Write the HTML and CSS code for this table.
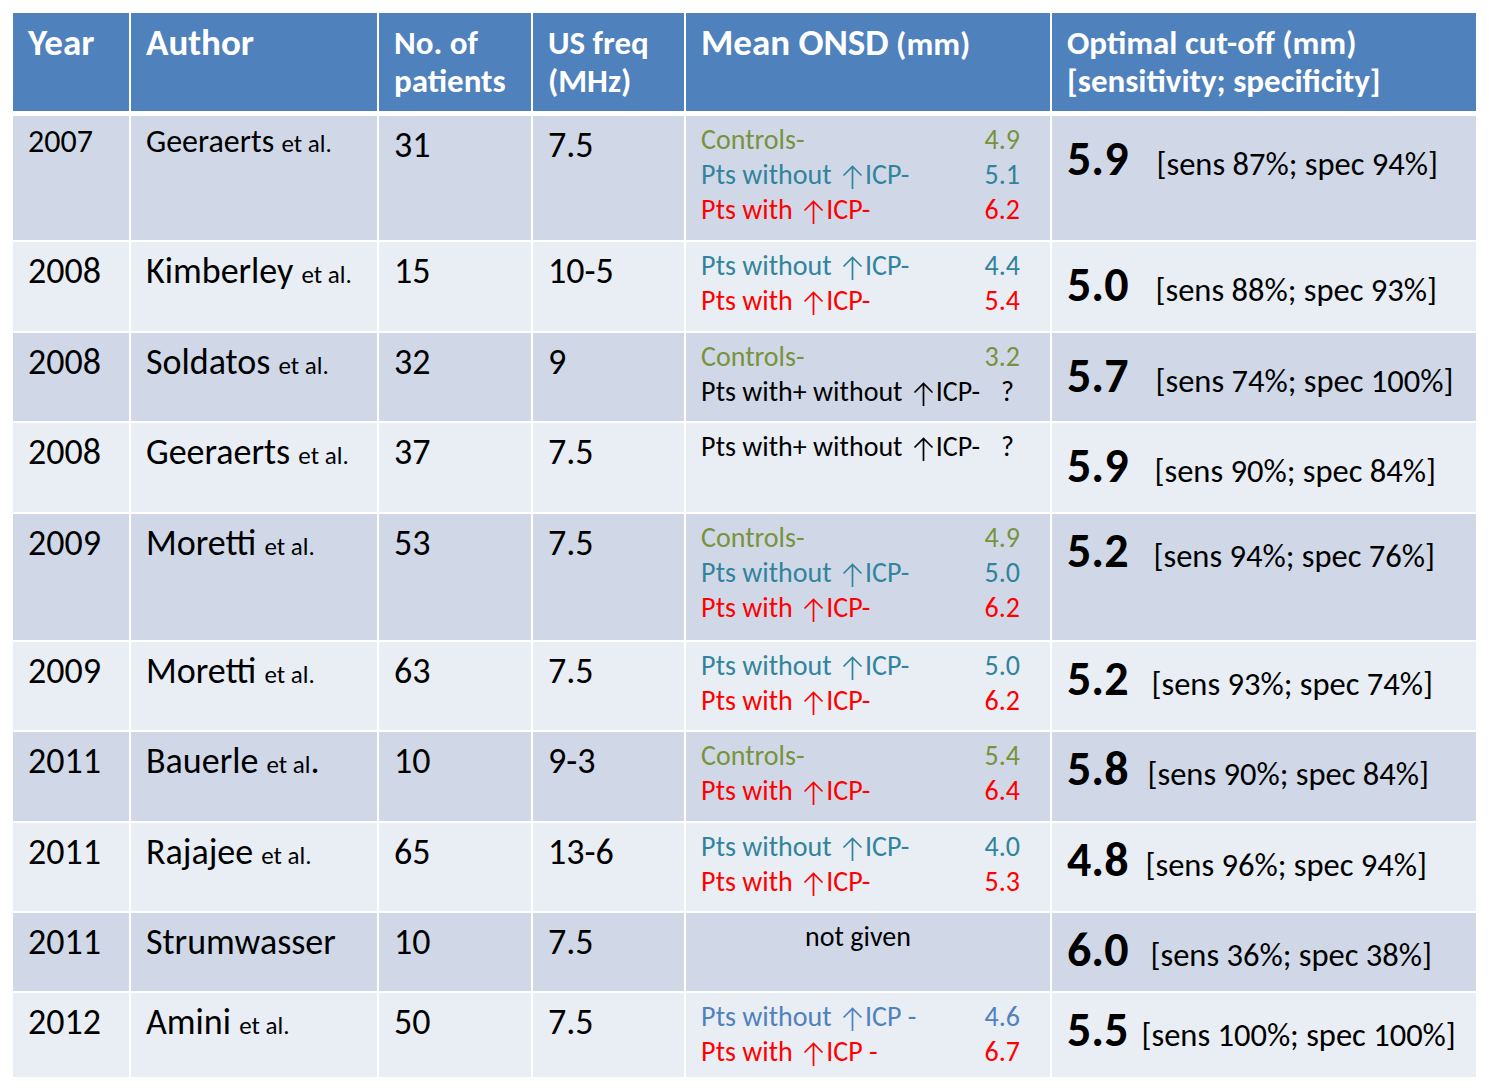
FILE: index.html
```html
<!DOCTYPE html>
<html lang="en">
<head>
<meta charset="utf-8">
<title>ONSD studies</title>
<link rel="stylesheet" href="styles.css">
</head>
<body>
<div class="table">
  <div class="row head">
    <div class="cell"><span class="h-big">Year</span></div>
    <div class="cell"><span class="h-big">Author</span></div>
    <div class="cell">No. of<br>patients</div>
    <div class="cell">US freq<br>(MHz)</div>
    <div class="cell"><span class="h-big">Mean ONSD</span> (mm)</div>
    <div class="cell">Optimal cut-off (mm)<br>[sensitivity; specificity]</div>
  </div>

  <div class="row odd r1">
    <div class="cell yr sm">2007</div>
    <div class="cell au sm">Geeraerts <span class="etal">et al.</span></div>
    <div class="cell num">31</div>
    <div class="cell num">7.5</div>
    <div class="cell onsd">
      <div class="ln ctrl"><span>Controls-</span><span>4.9</span></div>
      <div class="ln wo"><span>Pts without <svg class="up" viewBox="0 0 21 24"><path d="M10.5 1.5V24M1.5 10.5L10.5 1.5L19.5 10.5"/></svg>ICP-</span><span>5.1</span></div>
      <div class="ln wi"><span>Pts with <svg class="up" viewBox="0 0 21 24"><path d="M10.5 1.5V24M1.5 10.5L10.5 1.5L19.5 10.5"/></svg>ICP-</span><span>6.2</span></div>
    </div>
    <div class="cell cut hi"><b>5.9</b><span class="br g-28">[sens 87%; spec 94%]</span></div>
  </div>

  <div class="row even r2">
    <div class="cell yr">2008</div>
    <div class="cell au">Kimberley <span class="etal">et al.</span></div>
    <div class="cell num">15</div>
    <div class="cell num">10-5</div>
    <div class="cell onsd">
      <div class="ln wo"><span>Pts without <svg class="up" viewBox="0 0 21 24"><path d="M10.5 1.5V24M1.5 10.5L10.5 1.5L19.5 10.5"/></svg>ICP-</span><span>4.4</span></div>
      <div class="ln wi"><span>Pts with <svg class="up" viewBox="0 0 21 24"><path d="M10.5 1.5V24M1.5 10.5L10.5 1.5L19.5 10.5"/></svg>ICP-</span><span>5.4</span></div>
    </div>
    <div class="cell cut hi"><b>5.0</b><span class="br g-27">[sens 88%; spec 93%]</span></div>
  </div>

  <div class="row odd r3">
    <div class="cell yr">2008</div>
    <div class="cell au">Soldatos <span class="etal">et al.</span></div>
    <div class="cell num">32</div>
    <div class="cell num">9</div>
    <div class="cell onsd">
      <div class="ln ctrl"><span>Controls-</span><span>3.2</span></div>
      <div class="ln blk"><span>Pts with+ without <svg class="up" viewBox="0 0 21 24"><path d="M10.5 1.5V24M1.5 10.5L10.5 1.5L19.5 10.5"/></svg>ICP-</span><span class="q">?</span></div>
    </div>
    <div class="cell cut hi"><b>5.7</b><span class="br g-27">[sens 74%; spec 100%]</span></div>
  </div>

  <div class="row even r4">
    <div class="cell yr">2008</div>
    <div class="cell au">Geeraerts <span class="etal">et al.</span></div>
    <div class="cell num">37</div>
    <div class="cell num">7.5</div>
    <div class="cell onsd">
      <div class="ln blk"><span>Pts with+ without <svg class="up" viewBox="0 0 21 24"><path d="M10.5 1.5V24M1.5 10.5L10.5 1.5L19.5 10.5"/></svg>ICP-</span><span class="q">?</span></div>
    </div>
    <div class="cell cut hi"><b>5.9</b><span class="br g-26">[sens 90%; spec 84%]</span></div>
  </div>

  <div class="row odd r5">
    <div class="cell yr">2009</div>
    <div class="cell au">Moretti <span class="etal">et al.</span></div>
    <div class="cell num">53</div>
    <div class="cell num">7.5</div>
    <div class="cell onsd">
      <div class="ln ctrl"><span>Controls-</span><span>4.9</span></div>
      <div class="ln wo"><span>Pts without <svg class="up" viewBox="0 0 21 24"><path d="M10.5 1.5V24M1.5 10.5L10.5 1.5L19.5 10.5"/></svg>ICP-</span><span>5.0</span></div>
      <div class="ln wi"><span>Pts with <svg class="up" viewBox="0 0 21 24"><path d="M10.5 1.5V24M1.5 10.5L10.5 1.5L19.5 10.5"/></svg>ICP-</span><span>6.2</span></div>
    </div>
    <div class="cell cut"><b>5.2</b><span class="br g-25">[sens 94%; spec 76%]</span></div>
  </div>

  <div class="row even r6">
    <div class="cell yr">2009</div>
    <div class="cell au">Moretti <span class="etal">et al.</span></div>
    <div class="cell num">63</div>
    <div class="cell num">7.5</div>
    <div class="cell onsd">
      <div class="ln wo"><span>Pts without <svg class="up" viewBox="0 0 21 24"><path d="M10.5 1.5V24M1.5 10.5L10.5 1.5L19.5 10.5"/></svg>ICP-</span><span>5.0</span></div>
      <div class="ln wi"><span>Pts with <svg class="up" viewBox="0 0 21 24"><path d="M10.5 1.5V24M1.5 10.5L10.5 1.5L19.5 10.5"/></svg>ICP-</span><span>6.2</span></div>
    </div>
    <div class="cell cut"><b>5.2</b><span class="br g-23">[sens 93%; spec 74%]</span></div>
  </div>

  <div class="row odd r7">
    <div class="cell yr">2011</div>
    <div class="cell au">Bauerle <span class="etal">et al</span>.</div>
    <div class="cell num">10</div>
    <div class="cell num">9-3</div>
    <div class="cell onsd">
      <div class="ln ctrl"><span>Controls-</span><span>5.4</span></div>
      <div class="ln wi"><span>Pts with <svg class="up" viewBox="0 0 21 24"><path d="M10.5 1.5V24M1.5 10.5L10.5 1.5L19.5 10.5"/></svg>ICP-</span><span>6.4</span></div>
    </div>
    <div class="cell cut"><b>5.8</b><span class="br g-19">[sens 90%; spec 84%]</span></div>
  </div>

  <div class="row even r8">
    <div class="cell yr">2011</div>
    <div class="cell au">Rajajee <span class="etal">et al.</span></div>
    <div class="cell num">65</div>
    <div class="cell num">13-6</div>
    <div class="cell onsd">
      <div class="ln wo"><span>Pts without <svg class="up" viewBox="0 0 21 24"><path d="M10.5 1.5V24M1.5 10.5L10.5 1.5L19.5 10.5"/></svg>ICP-</span><span>4.0</span></div>
      <div class="ln wi"><span>Pts with <svg class="up" viewBox="0 0 21 24"><path d="M10.5 1.5V24M1.5 10.5L10.5 1.5L19.5 10.5"/></svg>ICP-</span><span>5.3</span></div>
    </div>
    <div class="cell cut"><b>4.8</b><span class="br g-17">[sens 96%; spec 94%]</span></div>
  </div>

  <div class="row odd r9">
    <div class="cell yr">2011</div>
    <div class="cell au">Strumwasser</div>
    <div class="cell num">10</div>
    <div class="cell num">7.5</div>
    <div class="cell onsd center">
      <div class="ng">not given</div>
    </div>
    <div class="cell cut"><b>6.0</b><span class="br g-22">[sens 36%; spec 38%]</span></div>
  </div>

  <div class="row even r10">
    <div class="cell yr">2012</div>
    <div class="cell au">Amini <span class="etal">et al.</span></div>
    <div class="cell num">50</div>
    <div class="cell num">7.5</div>
    <div class="cell onsd">
      <div class="ln wo2"><span>Pts without <svg class="up" viewBox="0 0 21 24"><path d="M10.5 1.5V24M1.5 10.5L10.5 1.5L19.5 10.5"/></svg>ICP -</span><span>4.6</span></div>
      <div class="ln wi"><span>Pts with <svg class="up" viewBox="0 0 21 24"><path d="M10.5 1.5V24M1.5 10.5L10.5 1.5L19.5 10.5"/></svg>ICP -</span><span>6.7</span></div>
    </div>
    <div class="cell cut"><b>5.5</b><span class="br g-13">[sens 100%; spec 100%]</span></div>
  </div>
</div>
</body>
</html>
```

FILE: styles.css
```css
* { box-sizing: border-box; }

html, body {
  margin: 0;
  padding: 0;
  background: #ffffff;
}

body {
  padding: 13px 0 0 13px;
  font-family: Carlito, Lato, "Open Sans", sans-serif;
  color: #000;
}

.table {
  width: 1463px;
  display: flex;
  flex-direction: column;
  gap: 2px;
}

.row {
  display: grid;
  grid-template-columns: 116px 246px 152px 151px 364px 424px;
  column-gap: 2px;
}

.row.head { height: 98px; margin-bottom: 3px; }
.r1 { height: 124px; }
.r2 { height: 89px; }
.r3 { height: 88px; }
.r4 { height: 89px; }
.r5 { height: 126px; }
.r6 { height: 88px; }
.r7 { height: 89px; }
.r8 { height: 88px; }
.r9 { height: 78px; }
.r10 { height: 84px; }

.head .cell { background: #4f81bd; color: #ffffff; font-weight: 700; }
.odd .cell { background: #d0d8e8; }
.even .cell { background: #e9edf4; }

.cell {
  padding-left: 15px;
}

/* header */
.head .cell {
  padding-top: 11px;
  font-size: 33px;
  line-height: 38px;
  white-space: nowrap;
}
.h-big { font-size: 37px; }

/* body text */
.yr, .au, .num {
  font-size: 36px;
  line-height: 40px;
  padding-top: 9px;
  white-space: nowrap;
}
.yr.sm, .au.sm {
  font-size: 32px;
  padding-top: 6px;
}
.etal { font-size: 25px; }

.onsd {
  font-size: 28px;
  line-height: 35px;
  padding-top: 6px;
  padding-right: 30px;
}
.ln {
  display: flex;
  justify-content: space-between;
  white-space: nowrap;
}
.ln .q { padding-right: 6px; }
.ctrl { color: #77933c; }
.wo { color: #31849b; }
.wo2 { color: #4f81bd; }
.wi { color: #ff0000; }
.blk { color: #000000; }

.up {
  width: 21px;
  height: 24px;
  vertical-align: -5px;
  fill: none;
  stroke: currentColor;
  stroke-width: 1.7;
  margin-left: 4px;
  margin-right: 2px;
}

.onsd.center { padding-right: 35px; text-align: center; padding-top: 6px; }

.cut {
  font-size: 32.5px;
  line-height: 56px;
  padding-top: 9px;
  white-space: nowrap;
}
.cut.hi { padding-top: 15px; }
.cut b {
  font-size: 48px;
  font-weight: 700;
}
.br { display: inline-block; }
.g-28 { margin-left: 28px; }
.g-27 { margin-left: 27px; }
.g-26 { margin-left: 26px; }
.g-25 { margin-left: 25px; }
.g-23 { margin-left: 23px; }
.g-22 { margin-left: 22px; }
.g-19 { margin-left: 19px; }
.g-17 { margin-left: 17px; }
.g-13 { margin-left: 13px; }
```
